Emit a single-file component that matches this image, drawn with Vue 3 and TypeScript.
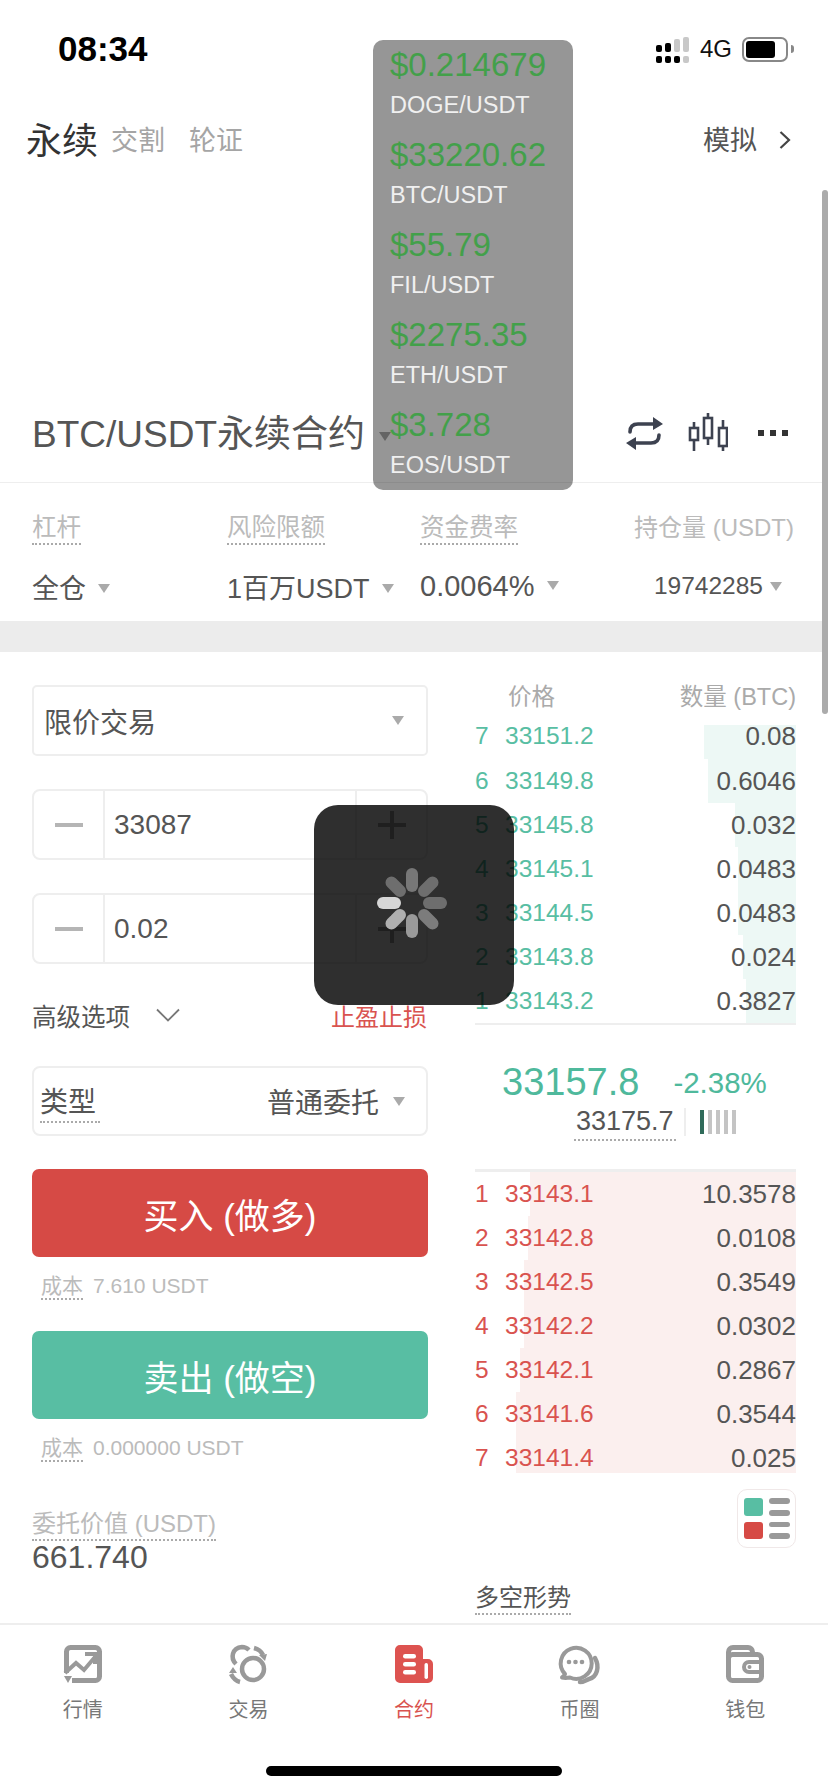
<script setup lang="ts">
interface Row {
  n: number
  price: string
  qty: string
  bar: number
}

const tickers = [
  { price: '$0.214679', pair: 'DOGE/USDT' },
  { price: '$33220.62', pair: 'BTC/USDT' },
  { price: '$55.79', pair: 'FIL/USDT' },
  { price: '$2275.35', pair: 'ETH/USDT' },
  { price: '$3.728', pair: 'EOS/USDT' }
]

const asks: Row[] = [
  { n: 7, price: '33151.2', qty: '0.08', bar: 92 },
  { n: 6, price: '33149.8', qty: '0.6046', bar: 88 },
  { n: 5, price: '33145.8', qty: '0.032', bar: 61 },
  { n: 4, price: '33145.1', qty: '0.0483', bar: 58 },
  { n: 3, price: '33144.5', qty: '0.0483', bar: 58 },
  { n: 2, price: '33143.8', qty: '0.024', bar: 53 },
  { n: 1, price: '33143.2', qty: '0.3827', bar: 50 }
]

const bids: Row[] = [
  { n: 1, price: '33143.1', qty: '10.3578', bar: 266 },
  { n: 2, price: '33142.8', qty: '0.0108', bar: 268 },
  { n: 3, price: '33142.5', qty: '0.3549', bar: 272 },
  { n: 4, price: '33142.2', qty: '0.0302', bar: 272 },
  { n: 5, price: '33142.1', qty: '0.2867', bar: 276 },
  { n: 6, price: '33141.6', qty: '0.3544', bar: 280 },
  { n: 7, price: '33141.4', qty: '0.025', bar: 280 }
]

const spokes = [
  { a: 0, c: '#777' },
  { a: 45, c: '#6e6e6e' },
  { a: 90, c: '#6e6e6e' },
  { a: 135, c: '#7c7c7c' },
  { a: 180, c: '#9a9a9a' },
  { a: 225, c: '#b0b0b0' },
  { a: 270, c: '#d6d6d6' },
  { a: 315, c: '#6e6e6e' }
]

const tabs = ['行情', '交易', '合约', '币圈', '钱包']
</script>

<template>
  <div class="page">
    <header class="status">
      <span class="time">08:34</span>
      <div class="status-right">
        <div class="signal">
          <i class="col"><b class="s1"></b><b></b></i>
          <i class="col"><b class="s2"></b><b></b></i>
          <i class="col"><b class="s3 off"></b><b></b></i>
          <i class="col"><b class="s4 off"></b><b class="off"></b></i>
        </div>
        <span class="net">4G</span>
        <div class="battery"><span></span></div>
        <div class="nub"></div>
      </div>
    </header>

    <nav class="top-tabs">
      <span class="t-main">永续</span>
      <span class="t-sub">交割</span>
      <span class="t-sub">轮证</span>
      <span class="t-right">模拟</span>
      <svg class="chev" width="14" height="22" viewBox="0 0 14 22">
        <path d="M2.5 3l8.500 8-8.500 8" fill="none" stroke="#444" stroke-width="2.200" />
      </svg>
    </nav>

    <div class="blank"></div>

    <section class="title-row">
      <span class="title">BTC/USDT永续合约</span>
      <i class="caret title-caret"></i>
      <div class="title-icons">
        <svg width="38" height="33" viewBox="0 0 38 33">
          <path d="M4 15c0-6 3-8 8-8h18M33 18c0 6-3 8-8 8H7" fill="none" stroke="#3d4250" stroke-width="3.600" stroke-linecap="round" />
          <path d="M27 0l10 7-10 6zM10 20L0 26l10 7z" fill="#3d4250" />
        </svg>
        <svg width="40" height="40" viewBox="0 0 40 40">
          <g fill="none" stroke="#3d4250" stroke-width="2.600">
            <rect x="2" y="15" width="8" height="12" />
            <rect x="16" y="5" width="8" height="20" />
            <rect x="31" y="15" width="8" height="18" />
          </g>
          <g stroke="#3d4250" stroke-width="2.600">
            <path d="M6 9v6M6 27v11M20 0v5M20 25v7M35 7v8M35 33v5" />
          </g>
        </svg>
        <div class="dots"><i></i><i></i><i></i></div>
      </div>
    </section>

    <section class="info">
      <div class="info-col">
        <span class="label"><u>杠杆</u></span>
        <span class="val">全仓<i class="caret"></i></span>
      </div>
      <div class="info-col">
        <span class="label"><u>风险限额</u></span>
        <span class="val">1百万USDT<i class="caret"></i></span>
      </div>
      <div class="info-col">
        <span class="label"><u>资金费率</u></span>
        <span class="val pct">0.0064%<i class="caret"></i></span>
      </div>
      <div class="info-col last">
        <span class="label">持仓量 (USDT)</span>
        <span class="val small">19742285<i class="caret"></i></span>
      </div>
    </section>

    <div class="band"></div>

    <main class="trade">
      <div class="left">
        <div class="box select">
          <span>限价交易</span>
          <i class="caret"></i>
        </div>

        <div class="box stepper">
          <div class="step"><i class="minus"></i></div>
          <div class="step-val">33087</div>
          <div class="step"><i class="plus"></i></div>
        </div>

        <div class="box stepper">
          <div class="step"><i class="minus"></i></div>
          <div class="step-val">0.02</div>
          <div class="step"><i class="plus"></i></div>
        </div>

        <div class="adv">
          <span>高级选项</span>
          <svg width="24" height="14" viewBox="0 0 24 14">
            <path d="M1 1.500l11 11 11-11" fill="none" stroke="#777" stroke-width="1.800" />
          </svg>
          <span class="tp">止盈止损</span>
        </div>

        <div class="box type">
          <u>类型</u>
          <span class="type-val">普通委托</span>
          <i class="caret"></i>
        </div>

        <button class="btn buy">买入 (做多)</button>
        <div class="cost"><u>成本</u><span>7.610 USDT</span></div>

        <button class="btn sell">卖出 (做空)</button>
        <div class="cost"><u>成本</u><span>0.000000 USDT</span></div>

        <div class="worth">
          <span class="worth-label">委托价值 (USDT)</span>
          <span class="worth-val">661.740</span>
        </div>
      </div>

      <div class="right">
        <div class="book-head">
          <span class="h-price">价格</span>
          <span>数量 (BTC)</span>
        </div>

        <div class="asks">
          <div v-for="r in asks" :key="r.n" class="row">
            <i class="fill fill-ask" :style="{ width: r.bar + 'px' }"></i>
            <span class="n green">{{ r.n }}</span>
            <span class="p green">{{ r.price }}</span>
            <span class="q">{{ r.qty }}</span>
          </div>
        </div>

        <div class="mid">
          <div class="mid-top">
            <span class="last-price">33157.8</span>
            <span class="change">-2.38%</span>
          </div>
          <div class="mid-bottom">
            <u class="index">33175.7</u>
            <i class="sep"></i>
            <div class="meter">
              <i class="on"></i><i></i><i></i><i></i><i></i>
            </div>
          </div>
        </div>

        <div class="bids">
          <div v-for="r in bids" :key="r.n" class="row">
            <i class="fill fill-bid" :style="{ width: r.bar + 'px' }"></i>
            <span class="n red">{{ r.n }}</span>
            <span class="p red">{{ r.price }}</span>
            <span class="q">{{ r.qty }}</span>
          </div>
        </div>

        <div class="layout-btn">
          <div class="squares"><i class="sq-g"></i><i class="sq-r"></i></div>
          <div class="pills"><i></i><i></i><i></i><i></i></div>
        </div>

        <div class="trend"><u>多空形势</u></div>
      </div>
    </main>

    <footer class="tabbar">
      <div v-for="(t, i) in tabs" :key="t" class="tab" :class="{ active: i === 2 }">
        <svg v-if="i === 0" width="38" height="38" viewBox="0 0 38 38">
          <path d="M2.500 28V6.500a4 4 0 0 1 4-4h25a4 4 0 0 1 4 4v25a4 4 0 0 1-4 4H8" fill="none" stroke="#999" stroke-width="5" />
          <path d="M1 28l11-10 8 7 11-13" fill="none" stroke="#999" stroke-width="4" />
          <path d="M21 9h10v10" fill="none" stroke="#999" stroke-width="4" />
          <path d="M0 31l8 0-4 7z" fill="#999" />
        </svg>
        <svg v-else-if="i === 1" width="38" height="38" viewBox="0 0 38 38">
          <circle cx="24" cy="24" r="11" fill="none" stroke="#999" stroke-width="4.500" />
          <path d="M7 19C1 13 3 3 13 2c3 0 5 1 7 3" fill="none" stroke="#999" stroke-width="4.500" />
          <path d="M25 3c4 1 7 3 9 7" fill="none" stroke="#999" stroke-width="4.500" />
          <path d="M30 10l8-1-2 7z" fill="#999" />
          <path d="M2 29c2 4 5 7 9 8" fill="none" stroke="#999" stroke-width="4.500" />
          <path d="M0 28l8 0-4-6z" fill="#999" />
        </svg>
        <svg v-else-if="i === 2" width="38" height="38" viewBox="0 0 38 38">
          <path d="M5 0h18a5 5 0 0 1 5 5v9h5a5 5 0 0 1 5 5v14a5 5 0 0 1-5 5H5a5 5 0 0 1-5-5V5a5 5 0 0 1 5-5z" fill="#dd5350" />
          <g fill="#fff">
            <rect x="8" y="9" width="13" height="4.500" rx="2.200" />
            <rect x="8" y="17" width="13" height="4.500" rx="2.200" />
            <rect x="8" y="25" width="13" height="4.500" rx="2.200" />
            <rect x="29.500" y="18" width="3.500" height="16" rx="1.700" />
          </g>
        </svg>
        <svg v-else-if="i === 3" class="bubble" width="42" height="42" viewBox="0 0 42 42">
          <path d="M6 31A15.500 15.500 0 1 1 11 34.500c-3 .500-6 .500-8 0 1.500-1 2.500-2 3-3.500z" fill="none" stroke="#999" stroke-width="4" stroke-linejoin="round" />
          <circle cx="10" cy="19" r="2.300" fill="#999" />
          <circle cx="16.500" cy="19" r="2.300" fill="#999" />
          <circle cx="23" cy="19" r="2.300" fill="#999" />
          <path d="M36 15c5 9 2 19-6 21-2 1-5 3-9 3" fill="none" stroke="#999" stroke-width="4.500" stroke-linecap="round" />
        </svg>
        <svg v-else width="38" height="38" viewBox="0 0 38 38">
          <path d="M2.500 32V7a4.500 4.500 0 0 1 4.500-4.500h15A4.500 4.500 0 0 1 26.500 7v2" fill="none" stroke="#999" stroke-width="5" />
          <rect x="2.500" y="9.500" width="33" height="26" rx="4" fill="none" stroke="#999" stroke-width="5" />
          <path d="M35 17H23a5 5 0 0 0 0 10h12" fill="none" stroke="#999" stroke-width="4" />
          <circle cx="23.500" cy="22" r="2" fill="#999" />
        </svg>
        <span>{{ t }}</span>
      </div>
    </footer>

    <div class="home-bar"></div>

    <div class="scrollbar"></div>

    <aside class="ticker">
      <div v-for="t in tickers" :key="t.pair" class="tick">
        <span class="tick-price">{{ t.price }}</span>
        <span class="tick-pair">{{ t.pair }}</span>
      </div>
    </aside>

    <div class="hud">
      <svg width="76" height="76" viewBox="-38 -38 76 76">
        <rect
          v-for="s in spokes"
          :key="s.a"
          x="-6"
          y="-35"
          width="12"
          height="24"
          rx="6"
          :fill="s.c"
          :transform="`rotate(${s.a})`"
        />
      </svg>
    </div>
  </div>
</template>

<style scoped>
.page {
  position: relative;
  width: 828px;
  height: 1792px;
  overflow: hidden;
  background: #fff;
  color: #555;
  font-family: "Liberation Sans", "Noto Sans CJK SC", sans-serif;
}

u {
  text-decoration: none;
  border-bottom: 2px dotted #aaa;
}

i {
  display: block;
  font-style: normal;
}

.status {
  height: 98px;
  display: flex;
  align-items: center;
  justify-content: space-between;
  padding: 0 34px 0 58px;
}

.time {
  font-size: 35px;
  font-weight: 700;
  color: #000;
}

.status-right {
  display: flex;
  align-items: center;
}

.signal {
  display: flex;
  gap: 3px;
  align-items: flex-end;
  margin-top: 2px;
}

.col {
  display: flex;
  flex-direction: column;
  gap: 4px;
  width: 6px;
}

.col b {
  display: block;
  height: 7px;
  border-radius: 2px;
  background: #000;
}

.col b.s1 { height: 7px; }
.col b.s2 { height: 9px; }
.col b.s3 { height: 13px; }
.col b.s4 { height: 15px; }
.col b.off { background: #c8c8c8; }

.net {
  margin-left: 11px;
  font-size: 24px;
  color: #111;
}

.battery {
  width: 46px;
  height: 25px;
  margin-left: 10px;
  box-sizing: border-box;
  border: 2px solid #888;
  border-radius: 7px;
  padding: 2px;
}

.battery span {
  display: block;
  width: 29px;
  height: 17px;
  background: #000;
  border-radius: 3px;
}

.nub {
  width: 3px;
  height: 8px;
  margin-left: 3px;
  background: #888;
  border-radius: 0 3px 3px 0;
}

.top-tabs {
  height: 84px;
  display: flex;
  align-items: center;
  padding: 0 36px 4px 26px;
  box-sizing: border-box;
}

.t-main {
  font-size: 36px;
  color: #333;
}

.t-sub {
  font-size: 27px;
  color: #a5a5a5;
  margin-left: 13px;
}

.t-sub + .t-sub {
  margin-left: 24px;
}

.t-right {
  margin-left: auto;
  font-size: 27px;
  color: #555;
}

.chev {
  margin-left: 21px;
  margin-top: 4px;
}

.blank {
  height: 202px;
}

.title-row {
  height: 98px;
  display: flex;
  align-items: center;
  padding: 0 40px 0 32px;
  border-bottom: 1px solid #eee;
}

.title {
  font-size: 37px;
  color: #555;
  margin-top: -4px;
}

.title-caret {
  margin: 6px 0 0 14px;
}

.title-icons {
  margin-left: auto;
  display: flex;
  align-items: center;
  gap: 24px;
}

.dots {
  display: flex;
  gap: 6px;
  margin-left: 6px;
}

.dots i {
  width: 6px;
  height: 6px;
  background: #333;
}

.caret {
  width: 0;
  height: 0;
  border-left: 6px solid transparent;
  border-right: 6px solid transparent;
  border-top: 9px solid #aaa;
  flex: none;
}

.info {
  height: 138px;
  display: grid;
  grid-template-columns: 195px 193px 1fr auto;
  padding: 0 34px 0 32px;
}

.info-col {
  display: flex;
  flex-direction: column;
}

.label {
  height: 30px;
  margin-top: 30px;
  font-size: 24.500px;
  line-height: 30px;
  color: #bbb;
}

.label u {
  display: inline-block;
  height: 30px;
}

.last .label {
  font-size: 24px;
}

.val {
  display: flex;
  align-items: center;
  height: 40px;
  margin-top: 23px;
  font-size: 27px;
  color: #555;
}

.val .caret {
  margin-left: 12px;
  margin-top: 4px;
}

.pct {
  font-size: 29px;
}

.pct .caret {
  margin-top: -2px;
}

.small {
  font-size: 24.500px;
  justify-content: flex-end;
}

.small .caret {
  margin: 0 12px 0 7px;
}

.band {
  height: 31px;
  background: #ececec;
}

.trade {
  display: grid;
  grid-template-columns: 396px 321px;
  column-gap: 47px;
  padding-left: 32px;
  height: 971px;
}

.left {
  padding-top: 33px;
}

.box {
  box-sizing: border-box;
  border: 2px solid #eee;
  border-radius: 5px;
  height: 71px;
  display: flex;
  align-items: center;
}

.select {
  padding: 0 22px 0 10px;
  justify-content: space-between;
  font-size: 28px;
}

.stepper {
  margin-top: 33px;
  border-radius: 8px;
}

.step {
  width: 69px;
  height: 100%;
  display: flex;
  align-items: center;
  justify-content: center;
  flex: none;
}

.step-val {
  flex: 1;
  height: 100%;
  display: flex;
  align-items: center;
  padding-left: 9px;
  border-left: 2px solid #eee;
  border-right: 2px solid #eee;
  font-size: 28px;
}

.minus {
  width: 28px;
  height: 4px;
  background: #b5b5b5;
}

.plus {
  position: relative;
  width: 28px;
  height: 4px;
  background: #a8a8a8;
}

.plus::after {
  content: "";
  position: absolute;
  left: 12px;
  top: -12px;
  width: 4px;
  height: 28px;
  background: #a8a8a8;
}

.adv {
  height: 44px;
  margin-top: 29px;
  display: flex;
  align-items: center;
  font-size: 24.500px;
}

.adv svg {
  margin-left: 26px;
}

.tp {
  margin-left: auto;
  margin-right: 1px;
  font-size: 24px;
  color: #d9534f;
}

.type {
  height: 70px;
  margin-top: 29px;
  padding: 0 21px 0 6px;
  border-radius: 8px;
  font-size: 28px;
  display: flex;
}

.type u {
  line-height: 36px;
  margin-top: 6px;
  padding-right: 4px;
}

.type-val {
  margin-left: auto;
  margin-right: 14px;
}

.btn {
  display: block;
  width: 100%;
  height: 88px;
  margin-top: 33px;
  border: 0;
  border-radius: 7px;
  color: #fff;
  font-family: inherit;
  font-size: 35px;
}

.buy {
  background: #d64a45;
}

.sell {
  background: #58bea3;
  margin-top: 31px;
}

.cost {
  height: 26px;
  margin: 17px 0 0 9px;
  display: flex;
  align-items: flex-start;
  font-size: 21px;
  line-height: 24px;
  color: #bbb;
}

.cost span {
  margin-left: 10px;
}

.worth {
  margin-top: 47px;
  display: flex;
  flex-direction: column;
  align-items: flex-start;
}

.worth-label {
  font-size: 24px;
  line-height: 30px;
  color: #bbb;
  border-bottom: 2px dotted #aaa;
}

.worth-val {
  font-size: 32px;
  line-height: 32px;
  color: #555;
}

.book-head {
  height: 40px;
  margin: 23px 0 10px;
  display: flex;
  align-items: center;
  justify-content: space-between;
  font-size: 23.500px;
  color: #aaa;
}

.h-price {
  margin-left: 33px;
}

.asks {
  height: 298px;
  display: flex;
  flex-direction: column;
  border-bottom: 2px solid #eee;
}

.row {
  position: relative;
  flex: none;
  height: 44px;
  display: flex;
  align-items: center;
  font-size: 24.500px;
}

/* the top and bottom rows of the book are cut short, bar included */
.asks .row:first-child {
  height: 34px;
  align-items: flex-start;
  line-height: 22px;
}

.bids .row:last-child {
  height: 37px;
  align-items: flex-start;
  padding-top: 8px;
  box-sizing: border-box;
  line-height: 28px;
}

.fill {
  position: absolute;
  right: 0;
  top: 0;
  bottom: 0;
}

.fill-ask { background: #edf8f5; }
.fill-bid { background: #fbefee; }

.row span {
  position: relative;
}

.n {
  width: 30px;
}

.q {
  margin-left: auto;
  font-size: 26px;
  color: #555;
}

.green { color: #58bea3; }
.red { color: #d9534f; }

.mid {
  height: 144px;
}

.mid-top {
  height: 76px;
  padding: 39px 0 0 27px;
  box-sizing: border-box;
  display: flex;
  align-items: center;
}

.last-price {
  font-size: 38px;
  color: #4fb99c;
}

.change {
  margin-left: 34px;
  font-size: 29.500px;
  color: #4fb99c;
}

.mid-bottom {
  display: flex;
  align-items: center;
  margin-top: 2px;
  padding-left: 99px;
}

.index {
  font-size: 27px;
  line-height: 36px;
  padding: 0 2px;
  height: 36px;
}

.sep {
  width: 2px;
  height: 28px;
  margin-left: 8px;
  background: #eee;
}

.meter {
  display: flex;
  gap: 4px;
  margin-left: 14px;
}

.meter i {
  width: 4px;
  height: 24px;
  background: #c4c4c4;
}

.meter .on {
  background: #2f6b5a;
}

.bids {
  height: 304px;
  border-top: 3px solid #eee;
  box-sizing: border-box;
}

.layout-btn {
  width: 59px;
  height: 59px;
  box-sizing: border-box;
  margin: 16px 0 0 262px;
  padding: 8px 6px;
  border: 1px solid #f0e8e8;
  border-radius: 10px;
  display: flex;
  gap: 6px;
}

.squares {
  display: flex;
  flex-direction: column;
  gap: 6px;
}

.squares i {
  width: 19px;
  height: 18px;
  border-radius: 3px;
}

.sq-g { background: #58bea3; }
.sq-r { background: #d64a45; }

.pills {
  display: flex;
  flex-direction: column;
  gap: 6px;
}

.pills i {
  width: 21px;
  height: 6px;
  border-radius: 3px;
  background: #999;
}

.trend {
  margin-top: 35px;
  font-size: 24px;
  line-height: 30px;
  color: #555;
}

.trend u {
  display: inline-block;
}

.tabbar {
  height: 168px;
  box-sizing: border-box;
  border-top: 2px solid #eee;
  display: grid;
  grid-template-columns: repeat(5, 1fr);
}

.tab {
  display: flex;
  flex-direction: column;
  align-items: center;
  padding-top: 20px;
  font-size: 20px;
  color: #777;
}

.tab svg {
  overflow: visible;
}

.tab .bubble {
  margin: -2px 0;
}

.tab span {
  margin-top: 15px;
  line-height: 24px;
}

.tab.active {
  color: #d9534f;
}

.home-bar {
  position: absolute;
  left: 266px;
  bottom: 16px;
  width: 296px;
  height: 10px;
  background: #000;
  border-radius: 5px;
}

.scrollbar {
  position: absolute;
  right: 0;
  top: 190px;
  width: 6px;
  height: 524px;
  background: #ababab;
  border-radius: 3px;
}

.ticker {
  position: absolute;
  left: 373px;
  top: 40px;
  width: 200px;
  height: 450px;
  background: rgba(0, 0, 0, 0.41);
  border-radius: 10px;
}

.tick {
  height: 90px;
  box-sizing: border-box;
  padding: 6px 0 0 17px;
  display: flex;
  flex-direction: column;
}

.tick-price {
  font-size: 33px;
  line-height: 38px;
  color: #43a04a;
}

.tick-pair {
  margin-top: 6px;
  font-size: 23.500px;
  line-height: 30px;
  color: #f0f0f0;
}

.hud {
  position: absolute;
  left: 314px;
  top: 805px;
  width: 200px;
  height: 200px;
  background: rgba(0, 0, 0, 0.816);
  border-radius: 24px;
  display: flex;
  align-items: center;
  justify-content: center;
}

.hud svg {
  margin: -4px 0 0 -4px;
}
</style>

<style>
html,
body {
  margin: 0;
  background: #fff;
}
</style>
